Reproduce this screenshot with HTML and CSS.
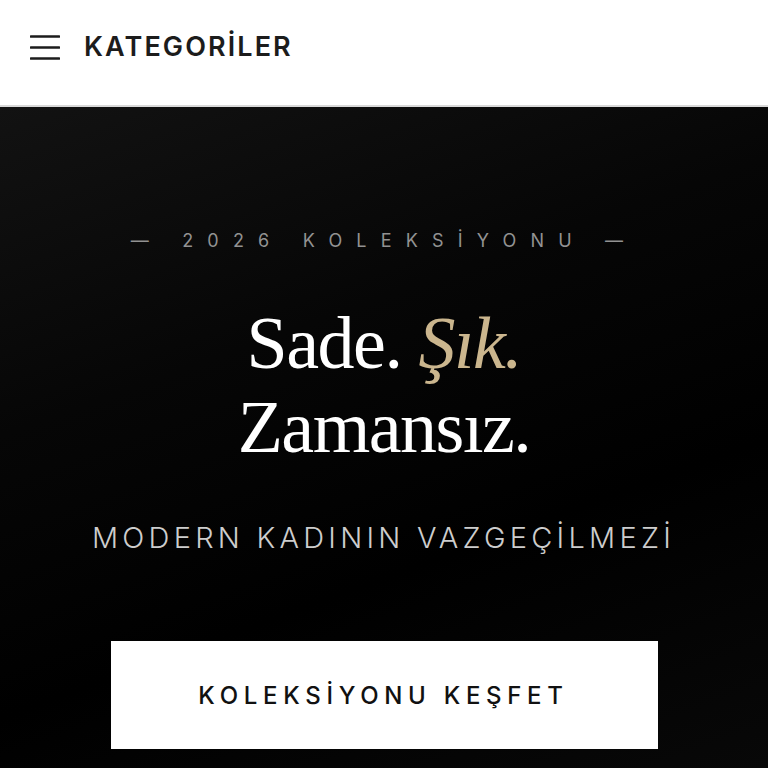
FILE: index.html
```html
<!DOCTYPE html>
<html lang="tr">
<head>
<meta charset="utf-8">
<title>Kategoriler</title>
<link rel="stylesheet" href="styles.css">
</head>
<body>
<header class="topbar">
  <svg class="menu-icon" width="30" height="26" viewBox="0 0 30 26" aria-hidden="true">
    <path d="M1 2.5H29M1 13.5H29M1 24.5H29" stroke="#1c1c1c" stroke-width="2.6" stroke-linecap="round"/>
  </svg>
  <span class="topbar-title">KATEGORİLER</span>
</header>
<main class="hero">
  <p class="eyebrow">— 2026 KOLEKSİYONU —</p>
  <h1 class="headline">Sade. <em class="gold">Şık.</em><br>Zamansız.</h1>
  <p class="tagline">MODERN KADININ VAZGEÇİLMEZİ</p>
  <a class="cta" href="#">KOLEKSİYONU KEŞFET</a>
</main>
</body>
</html>
```
FILE: styles.css
```css
html, body {
  margin: 0;
  padding: 0;
  height: 100%;
  background: #000;
}
body {
  font-family: Inter, "Noto Sans", sans-serif;
  display: flex;
  flex-direction: column;
}
.topbar {
  background: #fff;
  border-bottom: 2px solid #d9d9d9;
  display: flex;
  align-items: center;
  padding-left: 30px;
  gap: 24px;
  box-sizing: border-box;
  flex: 0 0 auto;
  height: 107px;
  padding-bottom: 12px;
}
.menu-icon {
  display: block;
}
.topbar-title {
  font-size: 27px;
  font-weight: 600;
  letter-spacing: 2.1px;
  color: #1c1c1c;
}
.hero {
  flex: 1;
  background: linear-gradient(160deg, #121212 0%, #060606 35%, #000 65%, #080808 100%);
  display: flex;
  flex-direction: column;
  align-items: center;
  padding-top: 122px;
}
.eyebrow {
  margin: 0;
  font-size: 18px;
  line-height: 24px;
  letter-spacing: 14.2px;
  color: #929292;
  font-weight: 400;
  white-space: nowrap;
}
.headline {
  margin: 48px 0 0;
  font-family: "Liberation Serif", "Times New Roman", serif;
  font-weight: 400;
  font-size: 74px;
  line-height: 84px;
  letter-spacing: -1.5px;
  color: #fff;
  text-align: center;
}
.gold {
  color: #cbb68e;
  font-style: italic;
}
.tagline {
  margin: 51px 0 0;
  font-size: 29px;
  line-height: 36px;
  font-weight: 300;
  letter-spacing: 4.25px;
  padding-right: 1px;
  color: #cdcdcd;
  white-space: nowrap;
}
.cta {
  margin-top: 85px;
  width: 547px;
  height: 108px;
  background: #fff;
  color: #111;
  text-decoration: none;
  display: flex;
  align-items: center;
  justify-content: center;
  font-size: 24px;
  font-weight: 500;
  letter-spacing: 5.7px;
  padding-right: 1px;
  box-sizing: border-box;
}
```
